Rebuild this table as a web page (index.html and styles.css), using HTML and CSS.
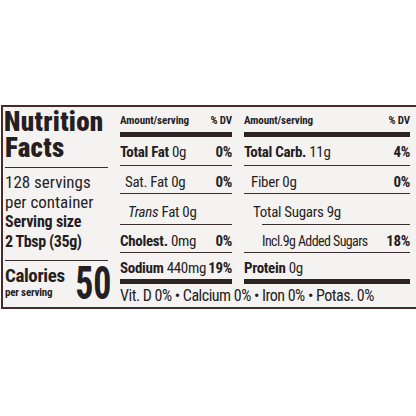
FILE: index.html
```html
<!DOCTYPE html>
<html>
<head>
<meta charset="utf-8">
<link rel="stylesheet" href="styles.css">
</head>
<body>
<div class="label">
  <div class="left">
    <div class="title">Nutrition<br>Facts</div>
    <div class="serv">
      <div>128 servings</div>
      <div>per container</div>
      <div class="b">Serving size</div>
      <div class="b t2">2 Tbsp (35g)</div>
    </div>
    <div class="cal">
      <div class="cal-l">
        <div class="cal-t">Calories</div>
        <div class="cal-s">per serving</div>
      </div>
      <div class="cal-n">50</div>
    </div>
  </div>
  <div class="right">
    <div class="cols">
      <div class="col c1">
        <div class="head"><span>Amount/serving</span><span>% DV</span></div>
        <div class="bar"></div>
        <div class="row r1"><span><b>Total Fat</b> 0g</span><b>0%</b></div>
        <div class="row r2"><span class="in5">Sat. Fat 0g</span><b>0%</b></div>
        <div class="row r3"><span class="in8"><i>Trans</i> Fat 0g</span></div>
        <div class="row r4"><span><b>Cholest.</b> 0mg</span><b>0%</b></div>
        <div class="row r5 nb"><span><b>Sodium</b> 440mg</span><b>19%</b></div>
        <div class="bar"></div>
      </div>
      <div class="col c2">
        <div class="head"><span>Amount/serving</span><span>% DV</span></div>
        <div class="bar"></div>
        <div class="row r1"><span><b>Total Carb.</b> 11g</span><b>4%</b></div>
        <div class="row r2"><span class="in7">Fiber 0g</span><b>0%</b></div>
        <div class="row r3 sug"><span class="out9">Total Sugars 9g</span></div>
        <div class="row r4"><span class="in18 tight">Incl.9g Added Sugars</span><b>18%</b></div>
        <div class="row r5 nb"><span><b>Protein</b> 0g</span></div>
        <div class="bar"></div>
      </div>
    </div>
    <div class="vit">Vit. D 0% • Calcium 0% • Iron 0% • Potas. 0%</div>
  </div>
</div>
</body>
</html>
```
FILE: styles.css
```css
html, body {
  margin: 0;
  padding: 0;
  background: #ffffff;
}
body {
  font-family: "Roboto Condensed", "Liberation Sans", sans-serif;
  color: #261e1f;
}
.label {
  margin: 105px 0 0 1px;
  width: 409px;
  height: 200px;
  border: 2px solid #4a2b2b;
  box-shadow: 0 1px 0 #c9a3a3;
  background: #f5f3f2;
  display: flex;
  padding: 0 2px 0 2px;
}
.left {
  width: 103px;
  padding-top: 2px;
}
.title {
  font-weight: 900;
  font-size: 27px;
  line-height: 26px;
  letter-spacing: 0.3px;
  padding-bottom: 6px;
  border-bottom: 1px solid #3a2e2e;
  text-indent: -1px;
}
.serv {
  padding-top: 4px;
  font-size: 17px;
  line-height: 20px;
  padding-bottom: 8px;
  border-bottom: 1px solid #3a2e2e;
}
.serv .b {
  font-weight: bold;
  font-size: 16px;
  letter-spacing: -0.2px;
}
.serv .t2 { letter-spacing: -0.4px; }
.cal {
  display: flex;
  align-items: flex-end;
  justify-content: space-between;
  padding-right: 7px;
}
.cal-l { padding-bottom: 4px; }
.cal-t {
  font-weight: bold;
  font-size: 19px;
  line-height: 22px;
  letter-spacing: -0.4px;
}
.cal-s {
  font-weight: bold;
  font-size: 11px;
  line-height: 12px;
  letter-spacing: -0.2px;
}
.cal-n {
  font-weight: bold;
  font-size: 46px;
  line-height: 40px;
  padding-top: 2px;
  transform: scaleX(0.78);
  transform-origin: right bottom;
}
.right {
  margin-left: 12px;
  display: flex;
  flex-direction: column;
}
.cols {
  display: flex;
  gap: 12px;
}
.col {
  display: flex;
  flex-direction: column;
}
.c1 { width: 112px; }
.c2 { width: 166px; }
.head {
  height: 25px;
  display: flex;
  justify-content: space-between;
  align-items: flex-end;
  font-weight: bold;
  font-size: 11px;
  line-height: 14px;
  letter-spacing: -0.1px;
  padding-bottom: 4px;
  box-sizing: border-box;
}
.bar {
  height: 5px;
  background: #2e2424;
}
.row {
  display: flex;
  justify-content: space-between;
  align-items: flex-end;
  font-size: 15px;
  line-height: 16px;
  letter-spacing: -0.3px;
  border-bottom: 1px solid #3a2e2e;
  box-sizing: border-box;
  white-space: nowrap;
}
.row b { font-weight: bold; }
.row.nb { border-bottom: none; }
.r1 { height: 29px; padding-bottom: 5px; }
.r2 { height: 28px; padding-bottom: 3px; }
.r3 { height: 31px; padding-bottom: 4px; }
.r4 { height: 28px; padding-bottom: 3px; }
.r5 { height: 26px; padding-bottom: 3px; }
.in5 { margin-left: 5px; }
.in7 { margin-left: 7px; }
.in8 { margin-left: 8px; }
.in18 { margin-left: 18px; }
.tight {
  font-size: 14px;
  letter-spacing: -0.6px;
}
.sug { margin-left: 18px; }
.out9 { margin-left: -9px; }
.vit {
  font-size: 16px;
  line-height: 18px;
  letter-spacing: -0.5px;
  margin-top: 3px;
  white-space: nowrap;
}
```
